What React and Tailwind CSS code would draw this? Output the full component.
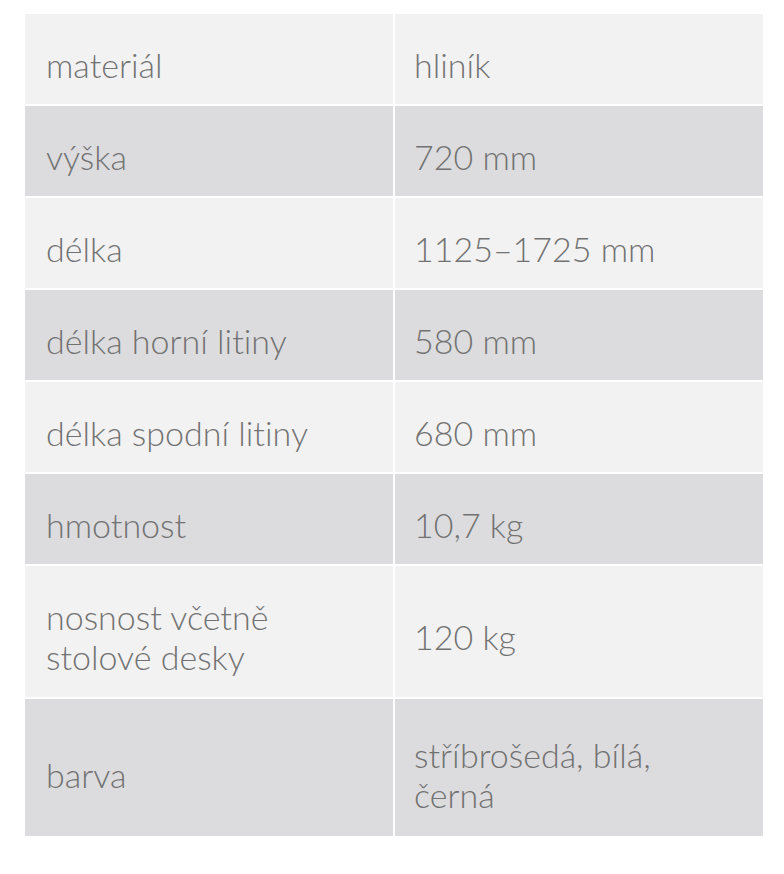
const rows = [
    ["materiál", "hliník"],
    ["výška", "720 mm"],
    ["délka", "1125–1725 mm"],
    ["délka horní litiny", "580 mm"],
    ["délka spodní litiny", "680 mm"],
    ["hmotnost", "10,7 kg"],
    ["nosnost včetně stolové desky", "120 kg"],
    ["barva", "stříbrošedá, bílá, černá"],
];

const App = () => {
    return (
        <div className="min-h-[874px] w-[784px] bg-white pt-[14px] pl-[25px] font-['Lato','Noto_Sans',sans-serif] font-light [font-variant-ligatures:none]">
            <div className="w-[738px] grid grid-cols-2 gap-[2px] bg-white">
                {rows.map(([label, value], idx) => {
                    const bg = idx % 2 === 0 ? "bg-[#f2f2f2]" : "bg-[#dcdcde]";
                    const pad =
                        idx === rows.length - 1
                            ? "pt-[36px] pb-[21px]"
                            : idx === 6
                            ? "pt-[31px] pb-[20px]"
                            : "pt-[31px] pb-[19px]";
                    return [
                        <div
                            key={label}
                            className={`${bg} ${pad} flex items-center pl-[21px] pr-6 text-[34px] leading-[40px] text-[#727272]`}
                        >
                            {label}
                        </div>,
                        <div
                            key={label + "-v"}
                            className={`${bg} ${pad} flex items-center pl-[19px] pr-6 text-[34px] leading-[40px] text-[#727272]`}
                        >
                            {value}
                        </div>,
                    ];
                })}
            </div>
        </div>
    );
};

export default App;
